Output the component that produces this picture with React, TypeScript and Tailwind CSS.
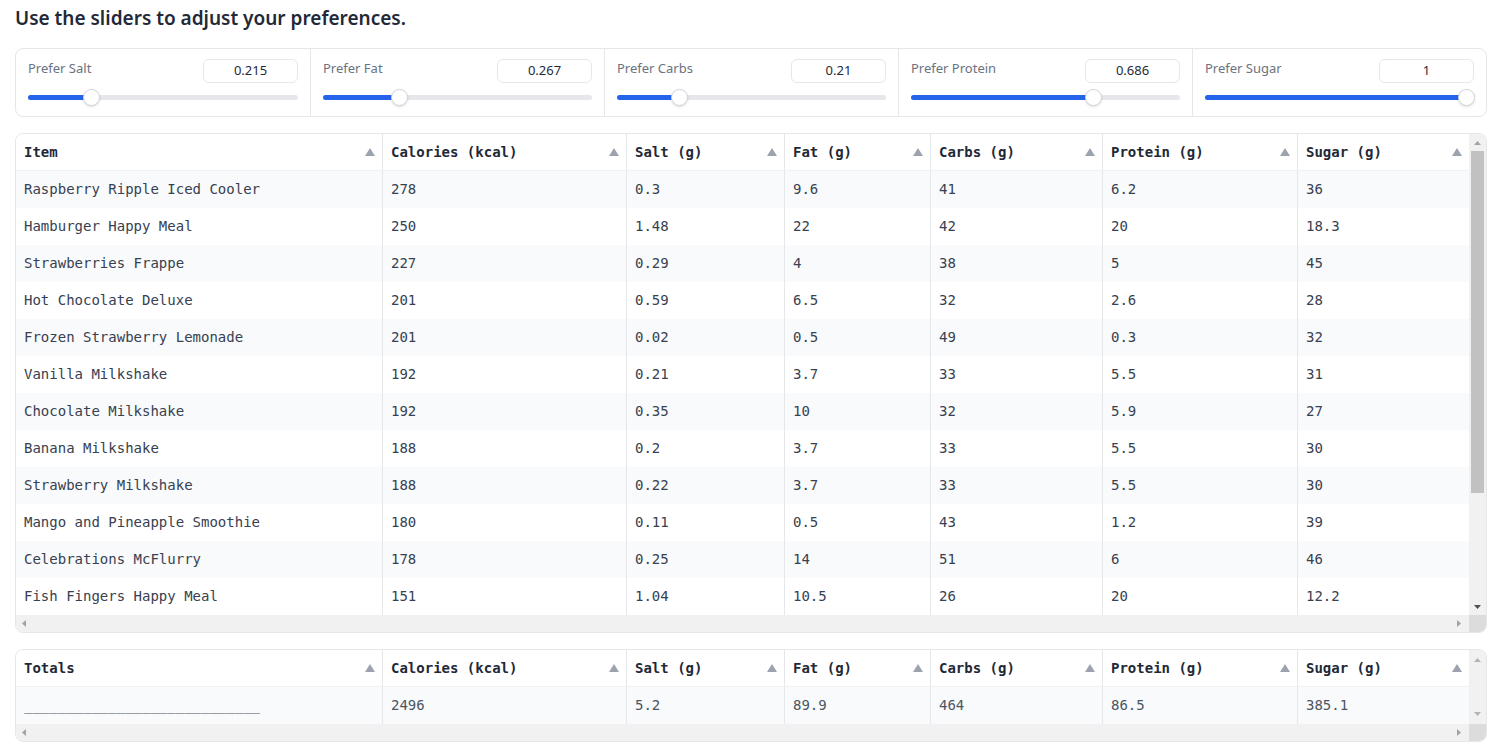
import React from "react";

const sans = { fontFamily: '"Source Sans Pro", "Noto Sans", "Open Sans", sans-serif' };
const mono = { fontFamily: '"DejaVu Sans Mono", "Liberation Mono", monospace' };

const sliders = [
  { label: "Prefer Salt", value: 0.215, text: "0.215" },
  { label: "Prefer Fat", value: 0.267, text: "0.267" },
  { label: "Prefer Carbs", value: 0.21, text: "0.21" },
  { label: "Prefer Protein", value: 0.686, text: "0.686" },
  { label: "Prefer Sugar", value: 1, text: "1" },
];

const headers = ["Calories (kcal)", "Salt (g)", "Fat (g)", "Carbs (g)", "Protein (g)", "Sugar (g)"];

const rows: string[][] = [
  ["Raspberry Ripple Iced Cooler", "278", "0.3", "9.6", "41", "6.2", "36"],
  ["Hamburger Happy Meal", "250", "1.48", "22", "42", "20", "18.3"],
  ["Strawberries Frappe", "227", "0.29", "4", "38", "5", "45"],
  ["Hot Chocolate Deluxe", "201", "0.59", "6.5", "32", "2.6", "28"],
  ["Frozen Strawberry Lemonade", "201", "0.02", "0.5", "49", "0.3", "32"],
  ["Vanilla Milkshake", "192", "0.21", "3.7", "33", "5.5", "31"],
  ["Chocolate Milkshake", "192", "0.35", "10", "32", "5.9", "27"],
  ["Banana Milkshake", "188", "0.2", "3.7", "33", "5.5", "30"],
  ["Strawberry Milkshake", "188", "0.22", "3.7", "33", "5.5", "30"],
  ["Mango and Pineapple Smoothie", "180", "0.11", "0.5", "43", "1.2", "39"],
  ["Celebrations McFlurry", "178", "0.25", "14", "51", "6", "46"],
  ["Fish Fingers Happy Meal", "151", "1.04", "10.5", "26", "20", "12.2"],
];

const gridCols = "grid grid-cols-[366px_244px_158px_146px_172px_195px_172px]";

function SortArrow() {
  return (
    <svg width="10" height="8" viewBox="0 0 10 8" className="shrink-0">
      <polygon points="5,0 10,8 0,8" fill="#9ca3af" />
    </svg>
  );
}

function Tri({ dir, color }: { dir: "up" | "down" | "left" | "right"; color: string }) {
  const pts =
    dir === "up"
      ? "0,4 7,4 3.5,0"
      : dir === "down"
      ? "0,0 7,0 3.5,4"
      : dir === "left"
      ? "4,0 4,7 0,3.5"
      : "0,0 0,7 4,3.5";
  const w = dir === "up" || dir === "down" ? 7 : 4;
  const h = dir === "up" || dir === "down" ? 4 : 7;
  return (
    <svg width={w} height={h} viewBox={`0 0 ${w} ${h}`}>
      <polygon points={pts} fill={color} />
    </svg>
  );
}

function Slider({ label, value, text }: { label: string; value: number; text: string }) {
  const thumbLeft = value * 252;
  return (
    <div className="px-3 pt-[10px] flex flex-col">
      <div className="flex justify-between items-start h-[24px]">
        <span className="text-[13px] leading-[18px] text-[#6b7280]" style={sans}>
          {label}
        </span>
        <div
          className="w-[95px] h-[24px] border border-[#e5e7eb] rounded-[6px] flex items-center justify-center text-[13px] text-[#1f2937]"
          style={sans}
        >
          {text}
        </div>
      </div>
      <div className="relative h-[17px] mt-[6px]">
        <div className="absolute left-0 right-0 top-[6px] h-[5px] rounded-full bg-[#e5e7eb]" />
        <div
          className="absolute left-0 top-[6px] h-[5px] rounded-full bg-[#2563eb]"
          style={{ width: thumbLeft + 8 }}
        />
        <div
          className="absolute top-0 w-[17px] h-[17px] rounded-full bg-white border border-[#d1d5db] shadow-sm"
          style={{ left: thumbLeft + 1 }}
        />
      </div>
    </div>
  );
}

function HeaderRow({ first }: { first: string }) {
  const cells = [first, ...headers];
  return (
    <div className={`${gridCols} h-[37px] bg-white border-b border-[#f1f2f4]`}>
      {cells.map((h, i) => (
        <div
          key={i}
          className={`flex items-center justify-between pl-2 pr-[7px] ${i > 0 ? "border-l border-[#e5e7eb]" : ""}`}
        >
          <span className="text-[14px] font-bold text-[#1f2937]" style={mono}>
            {h}
          </span>
          <SortArrow />
        </div>
      ))}
    </div>
  );
}

function HScroll() {
  return (
    <div className="flex h-[17px]">
      <div className="flex-1 bg-[#f1f1f1] flex items-center justify-between pl-[6px] pr-[8px]">
        <Tri dir="left" color="#a3a3a3" />
        <Tri dir="right" color="#a3a3a3" />
      </div>
      <div className="w-[17px] bg-[#dcdcdc]" />
    </div>
  );
}

export default function App() {
  return (
    <div className="bg-white min-h-[754px] w-[1508px]" style={sans}>
      <div className="ml-[15px] w-[1472px] pt-[4px]">
        <h1 className="text-[19px] leading-[28px] font-semibold text-[#1f2937] mb-4" style={sans}>
          Use the sliders to adjust your preferences.
        </h1>

        <div className="border border-[#e5e7eb] rounded-[8px] grid grid-cols-5 h-[69px] overflow-hidden">
          {sliders.map((s, i) => (
            <div key={i} className={i > 0 ? "border-l border-[#e5e7eb]" : ""}>
              <Slider {...s} />
            </div>
          ))}
        </div>

        <div className="mt-4 border border-[#e5e7eb] rounded-[8px] overflow-hidden">
          <div className="flex">
            <div className="w-[1453px]">
              <HeaderRow first="Item" />
              {rows.map((r, ri) => (
                <div
                  key={ri}
                  className={`${gridCols} h-[37px] ${ri % 2 === 0 ? "bg-[#f9fafb]" : "bg-white"}`}
                >
                  {r.map((c, ci) => (
                    <div
                      key={ci}
                      className={`flex items-center pl-2 text-[14px] text-[#374151] ${ci > 0 ? "border-l border-[#e5e7eb]" : ""}`}
                      style={mono}
                    >
                      {c}
                    </div>
                  ))}
                </div>
              ))}
            </div>
            <div className="w-[17px] bg-[#f1f1f1] flex flex-col">
              <div className="h-[17px] flex items-center justify-center">
                <Tri dir="up" color="#a3a3a3" />
              </div>
              <div className="flex-1 px-[2px]">
                <div className="h-[342px] bg-[#c1c1c1]" />
              </div>
              <div className="h-[17px] flex items-center justify-center">
                <Tri dir="down" color="#505050" />
              </div>
            </div>
          </div>
          <HScroll />
        </div>

        <div className="mt-4 border border-[#e5e7eb] rounded-[8px] overflow-hidden">
          <div className="flex">
            <div className="w-[1453px]">
              <HeaderRow first="Totals" />
              <div className={`${gridCols} h-[37px] bg-[#f9fafb]`}>
                {["____________________________", "2496", "5.2", "89.9", "464", "86.5", "385.1"].map((c, ci) => (
                  <div
                    key={ci}
                    className={`flex items-center pl-2 text-[14px] text-[#4b5563] ${ci > 0 ? "border-l border-[#e5e7eb]" : ""}`}
                    style={mono}
                  >
                    {c}
                  </div>
                ))}
              </div>
            </div>
            <div className="w-[17px] bg-[#f1f1f1] flex flex-col justify-between py-[8px] items-center">
              <Tri dir="up" color="#b4b4b4" />
              <Tri dir="down" color="#b4b4b4" />
            </div>
          </div>
          <HScroll />
        </div>
      </div>
    </div>
  );
}
